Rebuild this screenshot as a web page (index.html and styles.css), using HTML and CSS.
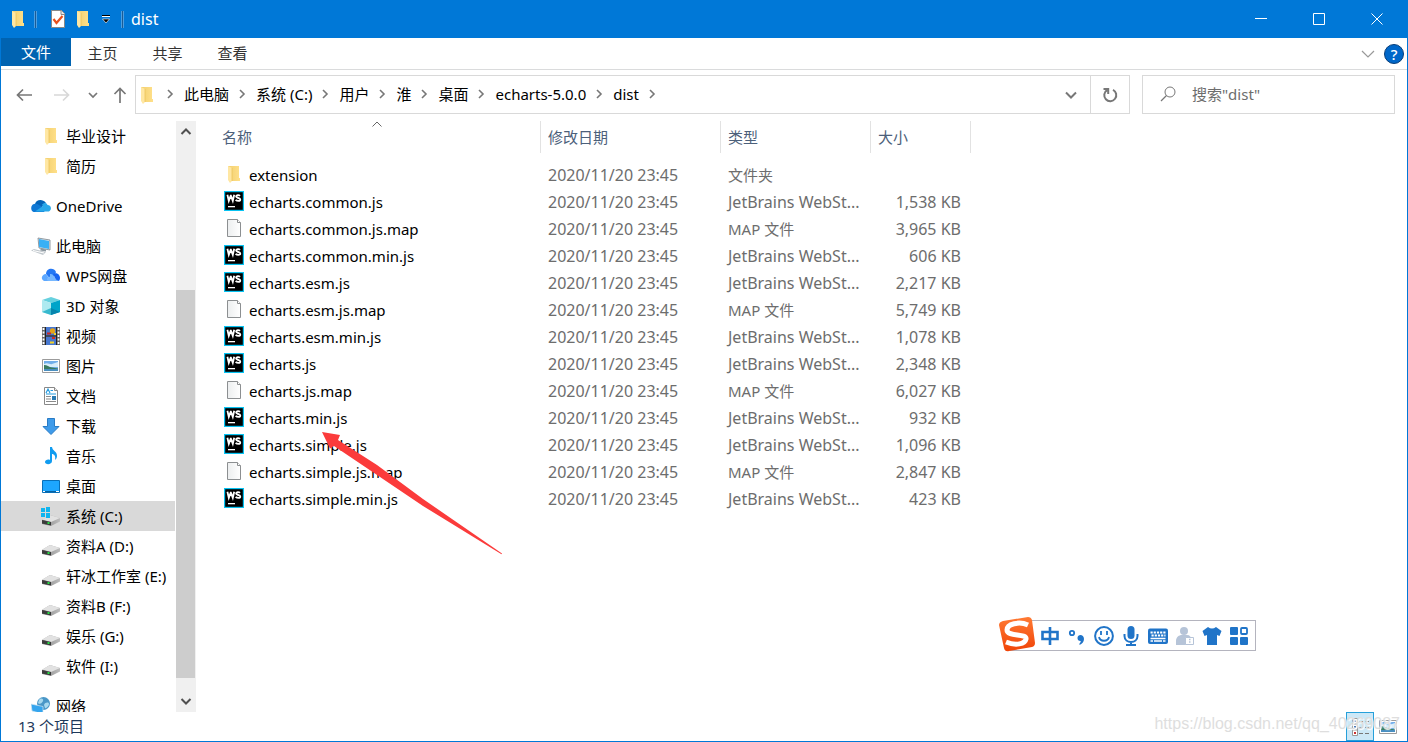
FILE: index.html
```html
<!DOCTYPE html>
<html lang="zh-CN">
<head>
<meta charset="utf-8">
<title>dist</title>
<link rel="stylesheet" href="styles.css">
</head>
<body>
<svg class="defs" aria-hidden="true">
  <defs>
    <linearGradient id="fold" x1="0" x2="1"><stop offset="0" stop-color="#f2cf6f"/><stop offset="1" stop-color="#ffe08a"/></linearGradient>
    <linearGradient id="drv" x1="0" x2="1"><stop offset="0" stop-color="#858585"/><stop offset="1" stop-color="#bdbdbd"/></linearGradient>
    <linearGradient id="sg" x1="0" x2="0" y1="0" y2="1"><stop offset="0" stop-color="#ff7a33"/><stop offset="1" stop-color="#f04408"/></linearGradient>
    <linearGradient id="paper" x1="0" x2="1"><stop offset="0" stop-color="#eceeef"/><stop offset="1" stop-color="#fff"/></linearGradient>
    <symbol id="folder" viewBox="0 0 20 20"><path d="M4 2h11v12h1v3H6z" fill="url(#fold)"/><path d="M4 2l4 2v13l-2 2-2-3z" fill="#ffe7a3"/><path d="M8 4v13" stroke="#ecc45c" stroke-width=".8"/></symbol>
    <symbol id="ws" viewBox="0 0 20 20"><path d="M0 0h20v20H0z" fill="#07c3f2"/><path d="M1.200 1.200h17.600v17.600H1.200z" fill="#000"/><path d="M3.400 3.800l1.400 6L6.700 4.600h.2L8.800 9.800l1.400-6M16 4.900c-1-1-3.900-1-3.900.7 0 1.800 4.200 1 4.200 2.800 0 2-3.300 1.700-4.700.4" fill="none" stroke="#fff" stroke-width="1.800"/><path d="M4 15h7v1.300H4z" fill="#fff"/></symbol>
    <symbol id="doc" viewBox="0 0 20 20"><path d="M3.500 1.500h10l3 3v14h-13z" fill="url(#paper)" stroke="#8c8f91"/><path d="M13.500 1.500v3h3" fill="#fff" stroke="#8c8f91"/></symbol>
    <symbol id="drive" viewBox="0 0 20 20"><path d="M1 12l8-5 10 3v3.500l-9 4.500-9-2z" fill="url(#drv)"/><path d="M1 11.500L9 7l10 3-9 4z" fill="#e2e2e2"/><path d="M1 12l9 2v3.500l-9-2z" fill="#3b3b3b"/><path d="M6.500 14h2v2h-2z" fill="#28dc46"/></symbol>
    <symbol id="right" viewBox="0 0 10 10"><path d="M3 1l4 4-4 4" fill="none" stroke="#777" stroke-width="1.600"/></symbol>
    <symbol id="picture" viewBox="0 0 20 20"><path d="M1.500 3.500h17v13h-17z" fill="#fff" stroke="#9b9b9b"/><path d="M3 5h14v10H3z" fill="#71aeea"/><path d="M3 8c4-2 6 1 8 0s4-1 6-2v5H3z" fill="#d8edfb"/><path d="M3 9c3 0 5 2 8 2.500l6 1V14H3z" fill="#397b61"/><path d="M3 13h14v2H3z" fill="#4a8fc0"/></symbol>
  </defs>
</svg>
<div class="window">
  <header class="titlebar">
    <svg class="ic"><use href="#folder"/></svg>
    <span class="bar"></span>
    <button class="quick" aria-label="属性"><svg viewBox="0 0 20 20" class="ic"><path d="M3.500 1.500h10l3 3v14h-13z" fill="#fff" stroke="#888"/><path d="M13 1.500v4h4" fill="#e8e8e8" stroke="#888"/><path d="M5.500 10l3 4 6-7" fill="none" stroke="#e8501c" stroke-width="2.200"/></svg></button>
    <button class="quick" aria-label="新建文件夹"><svg class="ic"><use href="#folder"/></svg></button>
    <button class="quick small" aria-label="自定义快速访问工具栏"><svg viewBox="0 0 10 10" width="10" height="10"><path d="M1 1.500h8" stroke="#000"/><path d="M1 2.500h8" stroke="#fff"/><path d="M1.500 5h7L5 9z" fill="#000" stroke="#fff" stroke-width=".6"/></svg></button>
    <span class="bar last"></span>
    <h1 class="title">dist</h1>
    <div class="caption">
      <button aria-label="最小化"><svg viewBox="0 0 12 12"><path d="M0 5.500h12"/></svg></button>
      <button aria-label="最大化"><svg viewBox="0 0 12 12"><path d="M.5.500h11v11H.5z"/></svg></button>
      <button aria-label="关闭"><svg viewBox="0 0 12 12"><path d="M.5.500l11 11M11.500.500l-11 11"/></svg></button>
    </div>
  </header>
  <div class="frame">
    <nav class="ribbon">
      <button class="tab file">文件</button><button class="tab">主页</button><button class="tab">共享</button><button class="tab">查看</button>
      <button class="collapse" aria-label="展开功能区"><svg viewBox="0 0 14 8" width="14" height="8"><path d="M1 1l6 6 6-6" fill="none" stroke="#999" stroke-width="1.200"/></svg></button>
      <button class="help" aria-label="帮助">?</button>
    </nav>
    <div class="address">
      <div class="history">
        <button aria-label="后退"><svg viewBox="0 0 16 16" width="16" height="16"><path d="M16 8H1.500M7 2.500L1.500 8 7 13.500" fill="none" stroke="#777" stroke-width="1.700"/></svg></button>
        <button aria-label="前进"><svg viewBox="0 0 16 16" width="16" height="16"><path d="M0 8h14.500M9 2.500L14.500 8 9 13.500" fill="none" stroke="#d8d8d8" stroke-width="1.700"/></svg></button>
        <button class="recent" aria-label="最近浏览的位置"><svg viewBox="0 0 10 10" width="10" height="10"><path d="M1 3l4 4 4-4" fill="none" stroke="#777" stroke-width="1.700"/></svg></button>
        <button class="up" aria-label="上移"><svg viewBox="0 0 16 16" width="16" height="16"><path d="M8 16V1.500M2.500 7L8 1.500 13.500 7" fill="none" stroke="#777" stroke-width="1.700"/></svg></button>
      </div>
      <div class="path">
        <svg class="ic"><use href="#folder"/></svg>
        <svg class="sep"><use href="#right"/></svg><a href="#">此电脑</a>
        <svg class="sep"><use href="#right"/></svg><a href="#">系统 (C:)</a>
        <svg class="sep"><use href="#right"/></svg><a href="#">用户</a>
        <svg class="sep"><use href="#right"/></svg><a href="#">淮</a>
        <svg class="sep"><use href="#right"/></svg><a href="#">桌面</a>
        <svg class="sep"><use href="#right"/></svg><a href="#">echarts-5.0.0</a>
        <svg class="sep"><use href="#right"/></svg><a href="#">dist</a>
        <svg class="sep"><use href="#right"/></svg>
        <button class="drop" aria-label="以前的位置"><svg viewBox="0 0 12 12" width="12" height="12"><path d="M1 3.500l5 5 5-5" fill="none" stroke="#777" stroke-width="2"/></svg></button>
        <button class="refresh" aria-label="刷新"><svg viewBox="0 0 16 16" width="16" height="16"><path d="M11 2.800a6 6 0 1 1-6 .3M1.500 2h4.700v5" fill="none" stroke="#777" stroke-width="2"/></svg></button>
      </div>
      <label class="search"><svg viewBox="0 0 16 16" width="16" height="16"><circle cx="10" cy="6" r="5" fill="none" stroke="#777"/><path d="M6.500 9.500L1 15" stroke="#777" stroke-width="1.200"/></svg><input type="text" aria-label="搜索" placeholder='搜索"dist"'></label>
    </div>
    <main class="content">
      <aside class="tree">
        <a class="node sub" href="#"><svg class="ic"><use href="#folder"/></svg>毕业设计</a>
        <a class="node sub" href="#"><svg class="ic"><use href="#folder"/></svg>简历</a>
        <a class="node root" href="#"><svg class="ic" viewBox="0 0 20 20"><path d="M4 8c1-4 7-6 11-1l-6 6z" fill="#0364b8"/><path d="M1 15C-2 9 4 6 8 9l7 4-2 3H4c-1 0-2 0-3-1z" fill="#0f78d4"/><path d="M11 9c2-3 5-2 5.500 0 4 0 4.500 5 1.500 6.500H4L12 10z" fill="#28a8ea"/></svg>OneDrive</a>
        <a class="node root" href="#"><svg class="ic" viewBox="0 0 20 20"><path d="M7 2l12 2v10L8 12z" fill="#e1e5e8" stroke="#78848d" stroke-width=".8"/><path d="M8 3l10 2v8L8 11z" fill="#3ab0f5"/><path d="M10 12.500l5 1v2l-6-1z" fill="#8b979f"/><path d="M0 14.500l3-1.500 12 3-3 3z" fill="#c1c8cd"/><path d="M2 14.500l11 2.500" stroke="#fff"/></svg>此电脑</a>
        <a class="node sub" href="#"><svg class="ic" viewBox="0 0 20 20"><path d="M5 8c0-6 8-7 10-2l-4 9z" fill="#2478f4"/><path d="M3 15c-4-2-2-7 2-7l5 7z" fill="#5da8ff"/><path d="M9 8c4-1 4 5 9 7H8c-4 0-1-5 1-4" fill="#77b8ff"/><path d="M12 8c5-3 9 3 6 7-4-1-4-4-6-7z" fill="#1764f0"/></svg>WPS网盘</a>
        <a class="node sub" href="#"><svg class="ic" viewBox="0 0 20 20"><path d="M1 4l9-3 9 3-9 3z" fill="#67d1df"/><path d="M1 4l9 3v12l-9-3z" fill="#aeeaf0"/><path d="M10 7l9-3v12l-9 3z" fill="#00a4c9"/><path d="M1 16l9-4v7z" fill="#38b9ce"/><path d="M10 12l9 4-9 3z" fill="#0785ad"/></svg>3D 对象</a>
        <a class="node sub" href="#"><svg class="ic" viewBox="0 0 20 20"><path d="M1 1h18v18H1z" fill="#666"/><path d="M2.500 2v17M17.500 2v17" stroke="#fff" stroke-width="1.800" stroke-dasharray="2 1.500"/><path d="M5 1h10v8.500H5zM5 10.500h10V19H5z" fill="#4777cf"/><path d="M4.500 1v18M15.500 1v18M4.500 10h11" stroke="#222"/><circle cx="11.500" cy="5" r="2.700" fill="#e4a318"/><path d="M6 7.500h4M11 12h3" stroke="#cb2923" stroke-width="2"/><path d="M9 16.500h4M13 8h2" stroke="#f2d12b" stroke-width="2"/></svg>视频</a>
        <a class="node sub" href="#"><svg class="ic"><use href="#picture"/></svg>图片</a>
        <a class="node sub" href="#"><svg class="ic" viewBox="0 0 20 20"><path d="M3.500 1.500h10l3 3v14h-13z" fill="#fff" stroke="#888"/><path d="M13.500 1.500v3h3" fill="#eee" stroke="#888"/><path d="M5 7l2-4 2 4M9.500 4.500H12M5 8h10" fill="none" stroke="#259bdf" stroke-width="1.200"/><path d="M5 10.500h5M5 13h5M5 15.500h10" stroke="#8a8a8a"/><path d="M11 10h4v4h-4z" fill="#297ab2"/></svg>文档</a>
        <a class="node sub" href="#"><svg class="ic" viewBox="0 0 20 20"><path d="M6.500 2.500h7v8h4.500l-8 8-8-8h4.500z" fill="#3e9bea" stroke="#287bc5"/></svg>下载</a>
        <a class="node sub" href="#"><svg class="ic" viewBox="0 0 20 20"><path d="M9 1h2c.5 4 5 4 5 9 0 2-1 3-2 4 1-4-1-6-3-6v7c0 4-7 4-7 1 0-2 3-3 5-2z" fill="#119cf0"/></svg>音乐</a>
        <a class="node sub" href="#"><svg class="ic" viewBox="0 0 20 20"><path d="M1.500 4.500h17v12h-17z" fill="#1da6ff" stroke="#086fb8"/><path d="M2 15.500h16" stroke="#0662a1"/><path d="M2 15.500h2M15 15.500h3" stroke="#fff"/></svg>桌面</a>
        <a class="node sub selected" href="#"><svg class="ic" viewBox="0 0 20 20"><use href="#drive" y="2" width="20" height="20"/><path d="M0 2h4v4H0zM5 1h4v5H5zM0 7h4v4H0zM5 7h4v5H5z" fill="#10b5ef"/></svg>系统 (C:)</a>
        <a class="node sub" href="#"><svg class="ic low"><use href="#drive"/></svg>资料A (D:)</a>
        <a class="node sub" href="#"><svg class="ic low"><use href="#drive"/></svg>轩冰工作室 (E:)</a>
        <a class="node sub" href="#"><svg class="ic low"><use href="#drive"/></svg>资料B (F:)</a>
        <a class="node sub" href="#"><svg class="ic low"><use href="#drive"/></svg>娱乐 (G:)</a>
        <a class="node sub" href="#"><svg class="ic low"><use href="#drive"/></svg>软件 (I:)</a>
        <a class="node root" href="#"><svg class="ic" viewBox="0 0 20 20"><circle cx="12.500" cy="7.500" r="6.500" fill="#4a97c7"/><path d="M8 4c2-3 5-1 4 1s-3 4-5 2M13 9c1-3 5-3 5-1s-3 5-4 4z" fill="#a8d9ef"/><path d="M0 8l12 2.500V18L1 15z" fill="#35a5ee" stroke="#d4e6ef" stroke-width=".7"/><path d="M4 17l8 2" stroke="#748a99"/></svg>网络</a>
      </aside>
      <div class="scroll">
        <button aria-label="向上滚动"><svg viewBox="0 0 12 12" width="12" height="12"><path d="M1.500 9L6 4.500 10.500 9" fill="none" stroke="#505050" stroke-width="2"/></svg></button>
        <span class="before"></span><span class="thumb"></span><span class="after"></span>
        <button aria-label="向下滚动"><svg viewBox="0 0 12 12" width="12" height="12"><path d="M1.500 3L6 7.500 10.500 3" fill="none" stroke="#505050" stroke-width="2"/></svg></button>
      </div>
      <section class="files">
        <table>
          <colgroup><col class="c-name"><col class="c-date"><col class="c-type"><col class="c-size"></colgroup>
          <thead><tr><th><div>名称<svg class="sort" viewBox="0 0 10 6" width="10" height="6"><path d="M.5 5.500L5 1l4.500 4.500" fill="none" stroke="#666"/></svg></div></th><th><div>修改日期</div></th><th><div>类型</div></th><th><div>大小</div></th></tr></thead>
          <tbody>
            <tr><td><svg class="ic"><use href="#folder"/></svg>extension</td><td>2020/11/20 23:45</td><td class="zh">文件夹</td><td></td></tr>
            <tr><td><svg class="ic"><use href="#ws"/></svg>echarts.common.js</td><td>2020/11/20 23:45</td><td>JetBrains WebSt...</td><td>1,538 KB</td></tr>
            <tr><td><svg class="ic"><use href="#doc"/></svg>echarts.common.js.map</td><td>2020/11/20 23:45</td><td class="zh">MAP 文件</td><td>3,965 KB</td></tr>
            <tr><td><svg class="ic"><use href="#ws"/></svg>echarts.common.min.js</td><td>2020/11/20 23:45</td><td>JetBrains WebSt...</td><td>606 KB</td></tr>
            <tr><td><svg class="ic"><use href="#ws"/></svg>echarts.esm.js</td><td>2020/11/20 23:45</td><td>JetBrains WebSt...</td><td>2,217 KB</td></tr>
            <tr><td><svg class="ic"><use href="#doc"/></svg>echarts.esm.js.map</td><td>2020/11/20 23:45</td><td class="zh">MAP 文件</td><td>5,749 KB</td></tr>
            <tr><td><svg class="ic"><use href="#ws"/></svg>echarts.esm.min.js</td><td>2020/11/20 23:45</td><td>JetBrains WebSt...</td><td>1,078 KB</td></tr>
            <tr><td><svg class="ic"><use href="#ws"/></svg>echarts.js</td><td>2020/11/20 23:45</td><td>JetBrains WebSt...</td><td>2,348 KB</td></tr>
            <tr><td><svg class="ic"><use href="#doc"/></svg>echarts.js.map</td><td>2020/11/20 23:45</td><td class="zh">MAP 文件</td><td>6,027 KB</td></tr>
            <tr><td><svg class="ic"><use href="#ws"/></svg>echarts.min.js</td><td>2020/11/20 23:45</td><td>JetBrains WebSt...</td><td>932 KB</td></tr>
            <tr><td><svg class="ic"><use href="#ws"/></svg>echarts.simple.js</td><td>2020/11/20 23:45</td><td>JetBrains WebSt...</td><td>1,096 KB</td></tr>
            <tr><td><svg class="ic"><use href="#doc"/></svg>echarts.simple.js.map</td><td>2020/11/20 23:45</td><td class="zh">MAP 文件</td><td>2,847 KB</td></tr>
            <tr><td><svg class="ic"><use href="#ws"/></svg>echarts.simple.min.js</td><td>2020/11/20 23:45</td><td>JetBrains WebSt...</td><td>423 KB</td></tr>
          </tbody>
        </table>
        <svg class="arrow" viewBox="322 432 181 123" width="181" height="123"><path d="M322 432l18 3-2 5 39 25 46 34 79 54.500-.5.8L423 506l-63-42.500-26-17.500-4 2.500z" fill="#fb3b3b"/></svg>
      </section>
    </main>
    <footer class="status"><span class="count">13 个项目</span>
      <div class="views">
        <button class="on" aria-label="详细信息"><svg viewBox="0 0 20 20" class="ic"><path d="M2.500 1.500h5v17h-5zM2.500 7h5M2.500 13h5" fill="#fff" stroke="#999"/><path d="M4 3.500h2v1.500H4zM4 9h2v1.500H4z" fill="#4778b8"/><path d="M4 15h2v2H4z" fill="#c33"/><path d="M9 4.500h4M15 4.500h4M9 10.500h4M15 10.500h4M9 16.500h4M15 16.500h4" stroke="#777" stroke-width="1.200"/></svg></button>
        <button aria-label="大缩略图"><svg class="ic"><use href="#picture"/></svg></button>
      </div>
    </footer>
  </div>
  <div class="ime">
    <svg class="sogou" viewBox="0 0 36 36" width="36" height="36"><path d="M4 5L29 1q3 0 4 3l3 23q0 3-3 4L10 35q-4 1-5-3L0 9q0-3 4-4z" fill="url(#sg)"/><path d="M29 9C20 5 8 8 8 14c0 7 20 3 19 9-1 5-10 7-20 3" fill="none" stroke="#fff" stroke-width="5"/></svg>
    <button aria-label="中文"><svg viewBox="0 0 20 20"><path d="M2.500 6h15v7h-15zM10 1v18" fill="none" stroke="#2074c8" stroke-width="2.600"/></svg></button>
    <button aria-label="标点"><svg viewBox="0 0 20 20"><circle cx="5" cy="7" r="2.200" fill="none" stroke="#2074c8" stroke-width="1.800"/><path d="M10.500 12c0-4 6.500-4 6.500 1 0 3-2 5-4.500 6v-1.500c1-1 1.700-2 1-2.500-2 0-3-1-3-3z" fill="#2074c8"/></svg></button>
    <button aria-label="表情"><svg viewBox="0 0 20 20"><circle cx="10" cy="10" r="8.900" fill="none" stroke="#2074c8" stroke-width="2"/><path d="M7 5v4M13 5v4M5 11c1 5 9 5 10 0" fill="none" stroke="#2074c8" stroke-width="1.800"/></svg></button>
    <button aria-label="语音"><svg viewBox="0 0 20 20"><rect x="6.500" y="0" width="7" height="13" rx="3.500" fill="#2074c8"/><path d="M3.500 8v2c0 8 13 8 13 0V8M10 16v3M5 19h10" fill="none" stroke="#2074c8" stroke-width="2"/></svg></button>
    <button aria-label="键盘"><svg viewBox="0 0 20 20"><rect y="2.500" width="20" height="15.500" rx="2" fill="#2074c8"/><path d="M2.500 6.500h15M3.500 9.500h14" stroke="#fff" stroke-width="2" stroke-dasharray="2.200 1"/><path d="M2.500 12.500h15M2.500 15h2.500M6 15h8M15 15h2.500" stroke="#fff" stroke-width="1.500"/></svg></button>
    <button aria-label="账户"><svg viewBox="0 0 20 20"><circle cx="9" cy="5" r="4" fill="#b6c4d8"/><path d="M1 19v-4c0-4 3-6 6-6h5c3 0 4 2 5 5v5z" fill="#b6c4d8"/><path d="M10.500 11.500h8v7h-8z" fill="#fff" stroke="#b6c4d8"/><path d="M14 13.500h1.500M14 16h1.500" stroke="#b6c4d8" stroke-width="1.500"/></svg></button>
    <button aria-label="皮肤"><svg viewBox="0 0 20 20"><path d="M6 1q4 3 8 0l5.500 4-2 5-2.500-1v10H5V9l-2.500 1-2-5z" fill="#2074c8"/></svg></button>
    <button aria-label="工具箱"><svg viewBox="0 0 20 20"><rect x="1" y="1" width="8" height="8" rx="1" fill="#2074c8"/><rect x="12" y="2" width="6" height="6" rx="1" fill="none" stroke="#2074c8" stroke-width="1.800"/><rect x="1" y="11" width="8" height="8" rx="1" fill="#2074c8"/><rect x="11" y="11" width="8" height="8" rx="1" fill="#2074c8"/></svg></button>
  </div>
  <div class="watermark">https://blog.csdn.net/qq_40269087</div>
</div>
</body>
</html>
```
FILE: styles.css
```css
* { box-sizing: border-box; }
body { margin: 0; font: 15px/20px "Noto Sans", "Noto Sans CJK SC", sans-serif; color: #000; background: #fff; }
button { display: flex; align-items: center; justify-content: center; padding: 0; border: 0; background: none; font: inherit; color: inherit; }
a { color: inherit; text-decoration: none; }
svg { display: block; flex: none; }
.defs { position: absolute; width: 0; height: 0; }
.ic { width: 20px; height: 20px; flex: none; }
.window { position: relative; display: flex; flex-direction: column; height: 100vh; }

.titlebar { display: flex; align-items: center; height: 38px; padding-left: 8px; background: #0078d7; color: #fff; }
.bar { width: 3px; height: 17px; margin: 0 11px 0 6px; background: #1b5c96; border: 1px solid #4c9ee0; border-width: 0 1px; }
.bar.last { margin: 0 7px 0 10px; }
.quick { margin-right: 5px; }
.quick.small { margin: 0 0 0 3px; }
.title { margin: 0; font-size: 16px; font-weight: 400; line-height: 20px; }
.caption { display: flex; margin-left: auto; padding-right: 2px; }
.caption button { width: 58px; height: 38px; }
.caption svg { width: 12px; height: 12px; fill: none; stroke: #fff; }

.frame { flex: 1; min-height: 0; display: flex; flex-direction: column; border: 1px solid #0078d7; border-top: 0; }
.ribbon { display: flex; height: 32px; border-bottom: 1px solid #dadbdc; color: #333; padding-right: 3px; }
.tab { width: 65px; height: 30px; }
.tab.file { width: 70px; height: 28px; margin-right: -1px; background: #0063b1; color: #fff; }
.ribbon .collapse { margin-left: auto; margin-right: 9px; }
.help { align-self: center; width: 20px; height: 20px; border: 1px solid #083d78; border-radius: 50%; background: #0067c9; color: #fff; font-weight: 500; }

.address { display: flex; height: 51px; padding: 5px 12px 7px 0; }
.history { display: flex; align-items: center; width: 134px; padding-left: 15px; }
.history button { margin-right: 22px; }
.history .recent { margin-right: 14px; margin-left: -4px; }
.history .up { margin-right: 0; }
.path { flex: 1; display: flex; align-items: center; height: 39px; border: 1px solid #d9d9d9; padding-left: 1px; }
.path a { padding-bottom: 2px; white-space: nowrap; }
.sep { width: 10px; height: 10px; margin: 0 9px 2px 8px; }
.drop { margin-left: auto; width: 38px; height: 37px; }
.refresh { width: 39px; height: 37px; border-left: 1px solid #d9d9d9; }
.search { display: flex; align-items: center; width: 253px; margin-left: 12px; padding: 0 0 2px 17px; gap: 16px; border: 1px solid #d9d9d9; }
.search input { flex: 1; min-width: 0; padding: 0; border: 0; outline: 0; font: inherit; }
.search input::placeholder { color: #6d6d6d; opacity: 1; }

.content { flex: 1; min-height: 0; display: flex; }
.tree { width: 174px; overflow: hidden; }
.node { display: flex; align-items: center; gap: 5px; height: 30px; padding-left: 40px; white-space: nowrap; }
.root { margin-top: 10px; padding-left: 30px; }
.low { margin-top: 3px; }
.selected { background: #d9d9d9; }
.scroll { display: flex; flex-direction: column; width: 20px; margin-left: 1px; background: #f0f0f0; }
.scroll button { width: 19px; height: 20px; }
.before { flex: 149; }
.thumb { flex: 388; width: 19px; background: #cdcdcd; }
.after { flex: 14; }

.files { position: relative; flex: 1; min-width: 0; padding-left: 19px; }
table { width: 756px; table-layout: fixed; border-collapse: collapse; }
.c-name { width: 326px; }
.c-date { width: 180px; }
.c-type { width: 150px; }
.c-size { width: 100px; }
th { height: 41px; padding: 0; vertical-align: top; text-align: left; font-weight: 400; color: #4c607a; }
th div { position: relative; height: 32px; padding: 6px 7px; border-right: 1px solid #e2e2e2; }
.sort { position: absolute; top: 0; left: 157px; }
td { height: 27px; padding: 0 7px; font-size: 16px; line-height: 27px; color: #6d6d6d; white-space: nowrap; }
td.zh { font-size: 15px; }
td:first-child { display: flex; align-items: center; gap: 5px; padding-left: 9px; font-size: 15px; color: #000; }
td .ic { margin-bottom: 3px; }
td:last-child { padding-right: 10px; text-align: right; }
.arrow { position: absolute; left: 126px; top: 311px; }

.status { display: flex; height: 29px; padding: 0 5px 0 17px; color: #1e395b; }
.count { height: 28px; line-height: 28px; }
.views { display: flex; margin-left: auto; }
.views button { width: 28px; height: 29px; }
.views .on { border: 1px solid #26a0da; background: #cce8f7; }

.ime { position: absolute; right: 152px; bottom: 91px; display: flex; align-items: center; gap: 7px; width: 246px; height: 31px; padding: 0 5px 0 29px; background: #fff; border: 1px solid #b4b4be; }
.ime button, .ime button svg { width: 20px; height: 20px; }
.sogou { position: absolute; left: -12px; top: -5px; }
.watermark { position: absolute; right: 8px; bottom: 8px; font: 16px/20px "Liberation Sans", Arial, sans-serif; color: #dedede; text-shadow: 1px 1px 1px #fff; pointer-events: none; }
```
